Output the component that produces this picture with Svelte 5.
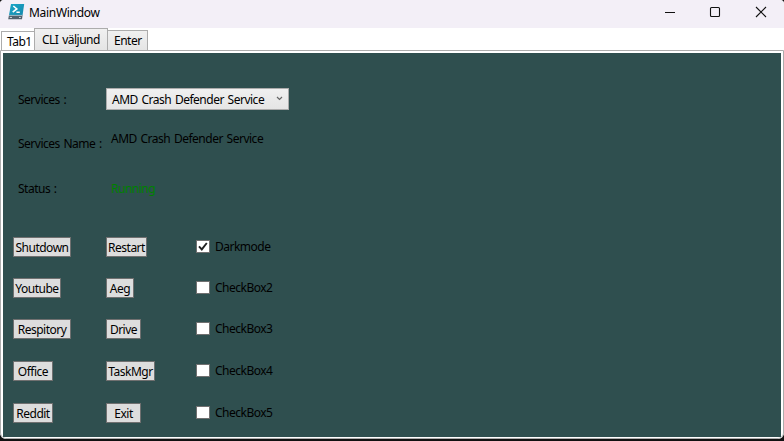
<script>
  const rows = [
    { left: ['Shutdown', 58], right: ['Restart', 41], check: 'Darkmode', checked: true },
    { left: ['Youtube', 48], right: ['Aeg', 28], check: 'CheckBox2', checked: false },
    { left: ['Respitory', 58], right: ['Drive', 35], check: 'CheckBox3', checked: false },
    { left: ['Office', 40], right: ['TaskMgr', 49], check: 'CheckBox4', checked: false },
    { left: ['Reddit', 40], right: ['Exit', 35], check: 'CheckBox5', checked: false }
  ];
</script>

<div class="desktop">
  <div class="window">
    <header>
      <svg class="logo" width="18" height="18" viewBox="0 0 18 18">
        <defs><linearGradient id="ps" x1="0" y1="0" x2="1" y2="1"><stop stop-color="#1ba8c9" /><stop offset="1" stop-color="#1688ac" /></linearGradient></defs>
        <path d="M3 1H16.2L14.6 12H1Z" fill="url(#ps)" />
        <path d="M1 12H14.6L14 16.3H0.2Z" fill="#52616d" />
        <path d="M1.1 12.4H14.4" stroke="#a4bdc9" stroke-width="1" />
        <path d="M1.8 14.5H4M11 14.5H12.8" stroke="#c4d1d8" />
        <path d="M5.3 3L8.8 6L4.7 9.2M8.4 9.3H11.8" fill="none" stroke="#fff" stroke-width="1.6" />
      </svg>
      <span class="title">MainWindow</span>
      <svg class="controls" width="110" height="12" viewBox="0 0 110 12" fill="none" stroke="#111" stroke-width="1">
        <path d="M1 6.5H11" />
        <rect x="46.5" y="1.5" width="9" height="9" rx="1" stroke-width="1.1" />
        <path d="M92 1L102 11M102 1L92 11" stroke-width="1.1" />
      </svg>
    </header>
    <nav>
      <div class="tab active"><span>Tab1</span></div>
      <div class="tab cli"><span>CLI väljund</span></div>
      <div class="tab enter"><span>Enter</span></div>
    </nav>
    <main>
      <div class="content">
        <div class="field services">
          <span>Services :</span>
          <div class="combo"><span>AMD Crash Defender Service</span>
            <svg width="7" height="5" viewBox="0 0 7 5"><path d="M1 1L3.5 3.5L6 1" fill="none" stroke="#666" stroke-width="1.2" /></svg>
          </div>
        </div>
        <div class="field name"><span>Services Name :</span><span class="value">AMD Crash Defender Service</span></div>
        <div class="field status"><span>Status :</span><span class="running">Running</span></div>
        <div class="actions">
          {#each rows as row}
            <div><button style:width="{row.left[1]}px">{row.left[0]}</button></div>
            <div><button style:width="{row.right[1]}px">{row.right[0]}</button></div>
            <div class="check">
              <span class="box">
                {#if row.checked}<svg width="12" height="11" viewBox="0 0 12 11"><path d="M2 5.3L4.8 8.4L9.8 2" fill="none" stroke="#212121" stroke-width="1.9" /></svg>{/if}
              </span>
              <span>{row.check}</span>
            </div>
          {/each}
        </div>
      </div>
    </main>
  </div>
</div>

<style>
  .desktop { width: 784px; height: 441px; background: #111; overflow: hidden; }
  .window { width: 784px; height: 439px; box-sizing: border-box; background: #fff; border-radius: 4px 4px 6px 6px; overflow: hidden; display: flex; flex-direction: column; font: 12px/16px "Noto Sans", "Open Sans", sans-serif; letter-spacing: -0.5px; word-spacing: 1.1px; color: #000; white-space: nowrap; }
  header { height: 28px; flex: none; background: #f3eff7; display: flex; align-items: center; box-sizing: border-box; padding: 0 17px 3px 8px; }
  .logo { margin-top: -1px; }
  .title { margin-left: 3px; margin-top: 1px; letter-spacing: -0.3px; }
  .controls { margin-left: auto; margin-right: -7px; margin-top: -1px; }
  nav { height: 22px; flex: none; display: flex; align-items: flex-end; }
  .tab { box-sizing: border-box; border: 1px solid #acacac; border-bottom: 0; background: linear-gradient(#f0f0f0, #e5e5e5); height: 20px; padding-left: 5px; line-height: 20px; }
  .active { width: 33px; height: 19px; margin-left: 1px; background: #fff; border-right: 0; }
  .cli { width: 74px; height: 22px; padding-left: 7px; line-height: 22px; }
  .enter { width: 40px; border-left: 0; padding-left: 6px; }
  main { flex: 1; box-sizing: border-box; border: 1px solid #acacac; border-radius: 0 0 6px 6px; padding: 2px 1px 1px 2px; }
  .content { height: 384px; width: 778px; background: #2f4f4f; box-sizing: border-box; padding: 35px 0 0 10px; }
  .field { display: grid; grid-template-columns: 88px auto; padding-left: 5px; justify-content: start; align-items: start; }
  .services { height: 44px; }
  .services > span { padding-top: 4px; }
  .combo { width: 183px; height: 22px; box-sizing: border-box; border: 1px solid #acacac; background: linear-gradient(#f0f0f0, #e5e5e5); display: flex; align-items: center; padding: 1px 5px 0; }
  .combo svg { margin-left: auto; margin-top: -3px; margin-right: 0; }
  .name { height: 45px; }
  .name > span:first-child { padding-top: 4px; }
  .value { padding-left: 5px; margin-top: -1px; }
  .status { height: 60px; padding-top: 4px; box-sizing: border-box; }
  .running { color: #008000; padding-left: 5px; }
  .actions { display: grid; grid-template-columns: 93px 90px auto; grid-template-rows: 41px 41px 42px 42px 20px; justify-content: start; }
  button { display: block; box-sizing: border-box; height: 20px; padding: 1px 0 0; border: 1px solid #707070; border-radius: 0; background: #ddd; font: inherit; letter-spacing: inherit; line-height: 17px; color: #000; text-align: center; }
  .check { display: flex; align-items: center; height: 20px; gap: 5px; }
  .box { box-sizing: border-box; width: 14px; height: 13px; margin-top: -1px; border: 1px solid #707070; background: #fff; display: flex; }
</style>
